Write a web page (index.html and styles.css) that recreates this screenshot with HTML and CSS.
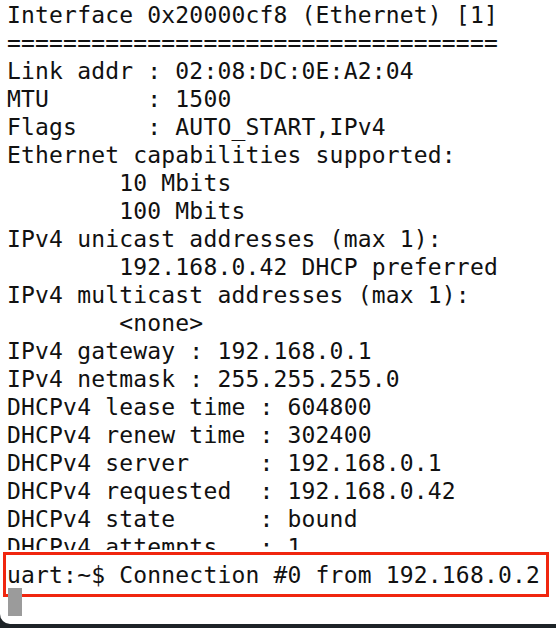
FILE: index.html
```html
<!DOCTYPE html>
<html>
<head>
<meta charset="utf-8">
<link rel="stylesheet" href="styles.css">
</head>
<body>
<div class="screen">
<pre class="log">Interface 0x20000cf8 (Ethernet) [1]
===================================
Link addr : 02:08:DC:0E:A2:04
MTU       : 1500
Flags     : AUTO_START,IPv4
Ethernet capabilities supported:
        10 Mbits
        100 Mbits
IPv4 unicast addresses (max 1):
        192.168.0.42 DHCP preferred
IPv4 multicast addresses (max 1):
        &lt;none&gt;
IPv4 gateway : 192.168.0.1
IPv4 netmask : 255.255.255.0
DHCPv4 lease time : 604800
DHCPv4 renew time : 302400
DHCPv4 server     : 192.168.0.1
DHCPv4 requested  : 192.168.0.42
DHCPv4 state      : bound
DHCPv4 attempts   : 1</pre>
<pre class="highlight">uart:~$ Connection #0 from 192.168.0.2</pre>
<div class="cursor"></div>
</div>
</body>
</html>
```
FILE: styles.css
```css
html, body {
  margin: 0;
  padding: 0;
  background: #1d2327;
}
body {
  width: 556px;
  height: 628px;
  overflow: hidden;
}
.screen {
  background: #ffffff;
  height: 624px;
  border-bottom-left-radius: 10px;
  padding-top: 1px;
  box-sizing: border-box;
  overflow: hidden;
}
.log, .highlight {
  margin: 0;
  font-family: "DejaVu Sans Mono", monospace;
  font-size: 23px;
  letter-spacing: 0.18px;
  line-height: 28px;
  color: #111;
  white-space: pre;
}
.log {
  padding-left: 7px;
}
.highlight {
  position: relative;
  margin-top: -9px;
  margin-left: 3px;
  width: 539px;
  border: 3px solid #f0260f;
  padding: 6px 0 5px 1px;
  background: #ffffff;
  box-shadow: 0 0 0 2px #ffffff;
}
.cursor {
  position: relative;
  margin-top: -9px;
  margin-left: 8px;
  width: 14px;
  height: 28px;
  background: #9b9b9b;
}
```
